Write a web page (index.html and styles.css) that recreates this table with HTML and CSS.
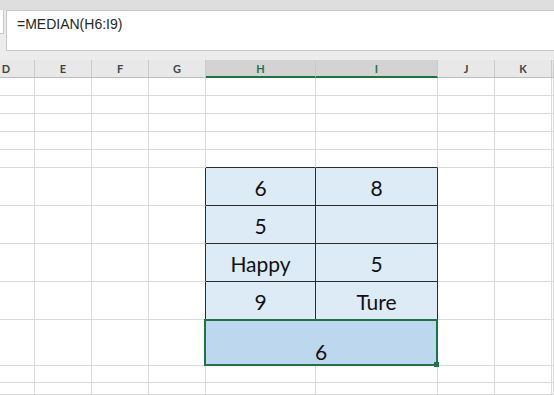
FILE: index.html
```html
<!DOCTYPE html>
<html lang="en">
<head>
    <meta charset="UTF-8">
    <title>Book1 - Excel</title>
    <link rel="stylesheet" href="styles.css">
</head>
<body>
<div class="top-strip"></div>
<div class="formula-bar">
    <div class="name-box"></div>
    <div class="formula-input">=MEDIAN(H6:I9)</div>
</div>
<div id="sheet" class="sheet">
</div>
<script>
    // the last column only peeks in at the right edge, so it gets no label
    const columns = ['D', 'E', 'F', 'G', 'H', 'I', 'J', 'K', '']
    const selected = ['H', 'I']
    const values = {
        6: ['6', '8'],
        7: ['5', ''],
        8: ['Happy', '5'],
        9: ['9', 'Ture']
    }

    function addHeader(sheet) {
        columns.forEach(col => {
            const head = document.createElement('div')
            head.classList.add('col-head')
            if (selected.includes(col)) {
                head.classList.add('col-head-selected')
            }
            head.textContent = col
            sheet.appendChild(head)
        })
    }

    function addRow(sheet, row) {
        columns.forEach(col => {
            // H10:I10 is one merged cell
            if (row === 10 && col === 'I') return

            const cell = document.createElement('div')
            cell.classList.add('cell')

            if (row === 10 && col === 'H') {
                cell.classList.add('cell-pick')
                cell.textContent = '6'
                const handle = document.createElement('span')
                handle.classList.add('fill-handle')
                cell.appendChild(handle)
            } else if (values[row] && selected.includes(col)) {
                cell.classList.add('cell-value')
                cell.textContent = values[row][selected.indexOf(col)]
            } else if (row === 5 && selected.includes(col)) {
                cell.classList.add('cell-above')
            } else if (values[row] && col === 'G') {
                cell.classList.add('cell-before')
            }
            sheet.appendChild(cell)
        })
    }

    (() => {
        const sheet = document.getElementById('sheet')
        addHeader(sheet)
        for (let row = 1; row <= 13; row++) {
            addRow(sheet, row)
        }
    })()
</script>
</body>
</html>
```

FILE: styles.css
```css
html, body {
    margin: 0;
    overflow: hidden;
    background-color: white;
}

body {
    width: 554px;
    height: 395px;
}

.top-strip {
    height: 10px;
    background-color: #dedede;
}

.formula-bar {
    display: flex;
    gap: 2px;
    height: 41px;
    padding-bottom: 9px;
    background-color: #ececec;
}

.name-box {
    width: 3px;
    height: 23px;
    background-color: white;
    border-right: 1px solid #c6c6c6;
    border-bottom: 1px solid #c6c6c6;
}

.formula-input {
    flex: 1;
    padding: 5px 10px;
    background-color: white;
    border: 1px solid #c6c6c6;
    border-right: none;
    font-family: "Liberation Sans", Arial, sans-serif;
    font-size: 14px;
    line-height: 16px;
    color: #262626;
}

.sheet {
    display: grid;
    grid-template-columns: 57px 57px 57px 57px 110px 122px 57px 57px 2px;
    grid-template-rows: 18px 18px 18px 18px 18px 18px 38px 38px 38px 38px 46px 17px 12px;
    margin-left: -22px;
    font-family: Lato, "Noto Sans", sans-serif;
}

.col-head {
    display: flex;
    align-items: center;
    justify-content: center;
    box-sizing: border-box;
    background-color: #e8e8e8;
    border-right: 1px solid #cacaca;
    border-bottom: 1px solid #bdbdbd;
    font-size: 11px;
    font-weight: bold;
    color: #444;
}

.col-head-selected {
    background-color: #d3d3d3;
    border-bottom: 2px solid #217346;
    color: #217346;
}

.cell {
    box-sizing: border-box;
    border-right: 1px solid #dadada;
    border-bottom: 1px solid #dadada;
}

.cell-above {
    border-bottom-color: #2b2b2b;
}

.cell-before {
    border-right-color: #2b2b2b;
}

.cell-value {
    display: flex;
    align-items: center;
    justify-content: center;
    padding-top: 2px;
    background-color: #ddebf7;
    border-right-color: #2b2b2b;
    border-bottom-color: #2b2b2b;
    font-size: 21px;
    line-height: 24px;
    color: #111;
}

.cell-pick {
    position: relative;
    grid-column: span 2;
    display: flex;
    align-items: flex-end;
    justify-content: center;
    margin: -1px 0 0 -2px;
    background-color: #bdd7ee;
    border: 2px solid #217346;
    font-size: 21px;
    line-height: 24px;
    color: #111;
}

.fill-handle {
    position: absolute;
    right: -3px;
    bottom: -3px;
    width: 5px;
    height: 5px;
    background-color: #217346;
}
```
